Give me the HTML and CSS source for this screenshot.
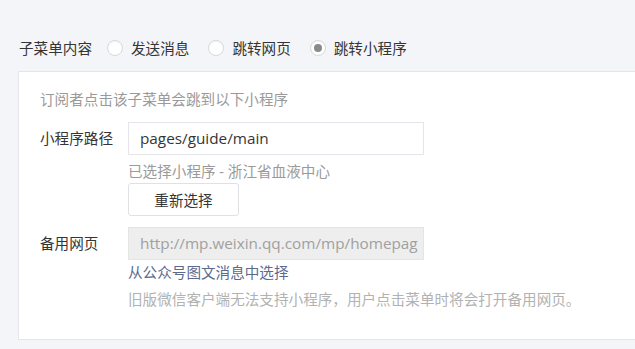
FILE: index.html
```html
<!DOCTYPE html>
<html lang="zh-CN">
<head>
<meta charset="utf-8">
<title>子菜单内容</title>
<link rel="stylesheet" href="styles.css">
</head>
<body>
<div class="page">
  <div class="type-row">
    <span class="type-label">子菜单内容</span>
    <label class="radio"><span class="dot"></span><span>发送消息</span></label>
    <label class="radio"><span class="dot"></span><span>跳转网页</span></label>
    <label class="radio checked"><span class="dot"></span><span>跳转小程序</span></label>
  </div>
  <div class="panel">
    <p class="tip">订阅者点击该子菜单会跳到以下小程序</p>
    <div class="field">
      <div class="field-label">小程序路径</div>
      <div class="field-body">
        <div class="input">pages/guide/main</div>
        <p class="desc">已选择小程序 - 浙江省血液中心</p>
        <button class="btn" type="button">重新选择</button>
      </div>
    </div>
    <div class="field second">
      <div class="field-label">备用网页</div>
      <div class="field-body">
        <div class="input disabled"><span class="clip">http://mp.weixin.qq.com/mp/homepage</span></div>
        <a class="link">从公众号图文消息中选择</a>
        <p class="note">旧版微信客户端无法支持小程序，用户点击菜单时将会打开备用网页。</p>
      </div>
    </div>
  </div>
</div>
</body>
</html>
```

FILE: styles.css
```css
html, body {
  margin: 0;
  padding: 0;
}
body {
  background: #f4f5f9;
  font-family: "Open Sans", "Noto Sans CJK SC", sans-serif;
  font-size: 14.6px;
  color: #353535;
  overflow: hidden;
  width: 635px;
  height: 349px;
}
.page {
  padding-top: 36px;
}
.type-row {
  display: flex;
  align-items: center;
  height: 24px;
  line-height: 24px;
  padding-left: 19px;
}
.type-label {
  margin-right: 15px;
}
.radio {
  display: flex;
  align-items: center;
  gap: 8px;
  margin-right: 19px;
}
.dot {
  box-sizing: border-box;
  width: 16px;
  height: 16px;
  border-radius: 50%;
  border: 1px solid #d6d8dc;
  background: #fff;
  box-shadow: inset 0 1px 2px rgba(0,0,0,0.04);
  position: relative;
}
.radio.checked .dot::after {
  content: "";
  position: absolute;
  left: 3px;
  top: 3px;
  width: 8px;
  height: 8px;
  border-radius: 50%;
  background: #8a8a8a;
}
.panel {
  margin: 11px 0 0 18px;
  width: 660px;
  background: #fff;
  border: 1px solid #e4e6eb;
  padding: 15px 0 30px 21px;
}
.tip {
  margin: 0;
  line-height: 24px;
  color: #9a9a9a;
}
.field {
  display: flex;
  margin-top: 11px;
}
.field-label {
  width: 88px;
  flex: none;
  line-height: 32px;
}
.field-body {
  display: flex;
  flex-direction: column;
  align-items: flex-start;
}
.input {
  box-sizing: border-box;
  width: 296px;
  height: 33px;
  line-height: 31px;
  border: 1px solid #e4e6eb;
  padding: 0 11px;
  font-size: 15.3px;
  color: #353535;
  white-space: nowrap;
  overflow: hidden;
  background: #fff;
}
.input.disabled {
  background: #eeeeee;
  color: #a0a0a0;
  border-color: #e4e4e4;
  padding-right: 0;
}
.clip {
  display: block;
  width: 278px;
  overflow: hidden;
}
.desc {
  margin: 6px 0 0;
  line-height: 20px;
  color: #9a9a9a;
}
.btn {
  margin-top: 2px;
  box-sizing: border-box;
  width: 111px;
  height: 33px;
  background: #fff;
  border: 1px solid #e0e1e4;
  border-radius: 3px;
  font-family: inherit;
  font-size: 14.6px;
  color: #353535;
  padding: 0;
}
.link {
  margin-top: 2px;
  line-height: 20px;
  color: #5b6a8f;
}
.note {
  margin: 7px 0 0;
  line-height: 20px;
  color: #b2b2b2;
}
```
